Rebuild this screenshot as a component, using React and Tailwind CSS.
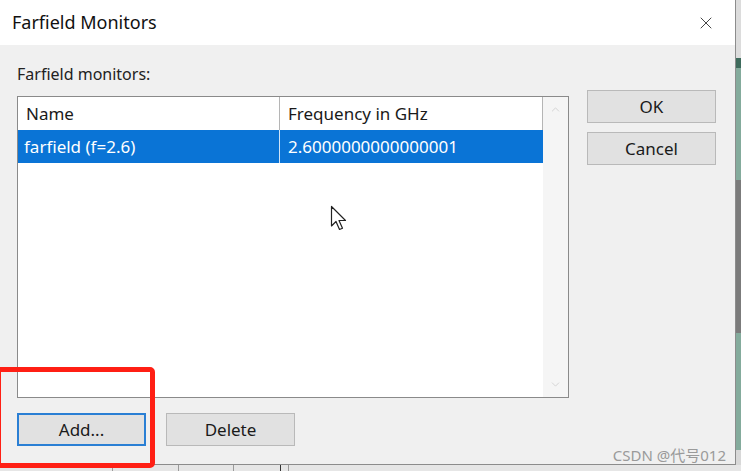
import { X, ChevronUp, ChevronDown } from "lucide-react";

const font = { fontFamily: '"Noto Sans", "Noto Sans CJK SC", sans-serif' };

function Btn({ children, focused }) {
  return (
    <button
      className={`flex h-[33px] w-[129px] items-center justify-center bg-[#e1e1e1] text-[17px] text-[#1a1a1a] ${
        focused ? "border-2 border-[#2a7fd4]" : "border border-[#b9b9b9]"
      }`}
    >
      {children}
    </button>
  );
}

function Cursor() {
  return (
    <svg
      className="absolute left-[330px] top-[205px]"
      width="20"
      height="28"
      viewBox="0 0 20 28"
    >
      <path
        d="M1.5 1.5 L1.5 21 L6 16.5 L9.5 24.5 L12.5 23.2 L9 15.5 L15.5 15.5 Z"
        fill="#fff"
        stroke="#222"
        strokeWidth="1.2"
        strokeLinejoin="round"
      />
    </svg>
  );
}

export default function App() {
  return (
    <div className="relative h-[471px] w-[741px] overflow-hidden bg-[#e8e8e8]" style={font}>
      <div className="flex h-[465px]">
        {/* dialog */}
        <div className="flex w-[736px] flex-col border-b border-r border-[#8c8c8c] bg-[#f0f0f0]">
          <div className="flex h-[45px] items-center justify-between bg-white pl-[12px] pr-[19px]">
            <span className="text-[18px] text-[#111]">Farfield Monitors</span>
            <X className="h-[20px] w-[20px] text-[#333]" strokeWidth={1.1} />
          </div>

          <div className="flex flex-1 pl-[17px]">
            <div className="flex w-[552px] flex-col pt-[19px]">
              <div className="h-[20px] text-[16px] leading-[20px] text-[#222]">Farfield monitors:</div>

              <div className="mt-[12px] flex h-[302px] border border-[#8a8a8a] bg-white">
                <div className="flex w-[525px] flex-col">
                  <div className="flex h-[33px] text-[17px] text-[#1a1a1a]">
                    <div className="flex w-[262px] items-center border-r border-[#b5b5b5] pl-[8px]">Name</div>
                    <div className="flex flex-1 items-center border-r border-[#b5b5b5] pl-[8px]">Frequency in GHz</div>
                  </div>
                  <div className="flex h-[33px] text-[17px] text-white">
                    <div className="flex w-[262px] items-center border-r border-[#cfe3f7] bg-[#0a74d6] pl-[6px]">
                      farfield (f=2.6)
                    </div>
                    <div className="flex flex-1 items-center bg-[#0a74d6] pl-[8px]">2.6000000000000001</div>
                  </div>
                </div>
                <div className="flex flex-1 flex-col items-center justify-between bg-[#f5f5f5] py-[6px]">
                  <ChevronUp className="h-[13px] w-[13px] text-[#cdcdcd]" strokeWidth={1.5} />
                  <ChevronDown className="h-[13px] w-[13px] text-[#cdcdcd]" strokeWidth={1.5} />
                </div>
              </div>

              <div className="mt-[15px] flex gap-[20px]">
                <Btn focused>Add...</Btn>
                <Btn>Delete</Btn>
              </div>
            </div>

            <div className="ml-[18px] flex flex-col gap-[9px] pt-[45px]">
              <Btn>OK</Btn>
              <Btn>Cancel</Btn>
            </div>
          </div>
        </div>

        {/* background window strip on the right */}
        <div className="flex flex-1 flex-col">
          <div className="h-[58px] bg-[#dcdcdc]" />
          <div className="h-[10px] bg-[#3e6b5c]" />
          <div className="h-[112px] bg-[#84ab9c]" />
          <div className="h-[153px] bg-[#7b7b7b]" />
          <div className="h-[117px] bg-[#84ab9c]" />
          <div className="flex-1 bg-[#d8d8d8]" />
        </div>
      </div>

      {/* background window strip at the bottom */}
      <div className="flex h-[6px] bg-[#e6e6e6]">
        <div className="w-[112px]" />
        <div className="w-[66px] border-l border-[#9a9a9a]" />
        <div className="w-[55px] border-l border-[#9a9a9a]" />
        <div className="w-[47px] border-l border-[#9a9a9a]" />
        <div className="w-[8px] border-l border-[#333]" />
        <div className="w-[60px] border-l border-[#9a9a9a]" />
      </div>

      <Cursor />

      <div className="absolute left-[-4px] top-[367px] h-[101px] w-[159px] rounded-[5px] border-[5px] border-[#ff1f14]" />

      <div className="absolute right-[15px] top-[444px] text-[15px] text-[#9a9a9a]">CSDN @代号012</div>
    </div>
  );
}
